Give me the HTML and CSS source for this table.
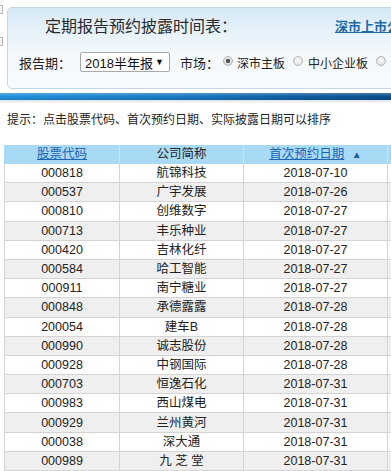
FILE: index.html
```html
<!DOCTYPE html>
<html lang="zh-CN">
<head>
<meta charset="utf-8">
<title>定期报告预约披露时间表</title>
<link rel="stylesheet" href="styles.css">
</head>
<body>
<div class="edge">
  <span class="edge-box e1"></span>
  <span class="edge-box e2"></span>
</div>
<div class="panel">
  <div class="title-row">
    <div class="title">定期报告预约披露时间表：</div>
    <a class="top-link" href="#">深市上市公</a>
  </div>
  <div class="filter-row">
    <span class="label">报告期：</span>
    <div class="select"><span>2018半年报</span><span class="caret">▼</span></div>
    <span class="label market">市场：</span>
    <span class="radio checked"></span><span class="opt">深市主板</span>
    <span class="radio"></span><span class="opt">中小企业板</span>
    <span class="radio"></span>
  </div>
</div>
<div class="bar"></div>
<div class="bar-shadow"></div>
<p class="hint">提示：点击股票代码、首次预约日期、实际披露日期可以排序</p>
<table class="grid">
  <colgroup><col class="c1"><col class="c2"><col class="c3"><col class="c4"></colgroup>
  <thead>
    <tr><th><a href="#">股票代码</a></th><th>公司简称</th><th><a href="#">首次预约日期</a> <span class="tri">▲</span></th><th></th></tr>
  </thead>
  <tbody>
    <tr><td>000818</td><td>航锦科技</td><td>2018-07-10</td><td></td></tr>
    <tr><td>000537</td><td>广宇发展</td><td>2018-07-26</td><td></td></tr>
    <tr><td>000810</td><td>创维数字</td><td>2018-07-27</td><td></td></tr>
    <tr><td>000713</td><td>丰乐种业</td><td>2018-07-27</td><td></td></tr>
    <tr><td>000420</td><td>吉林化纤</td><td>2018-07-27</td><td></td></tr>
    <tr><td>000584</td><td>哈工智能</td><td>2018-07-27</td><td></td></tr>
    <tr><td>000911</td><td>南宁糖业</td><td>2018-07-27</td><td></td></tr>
    <tr><td>000848</td><td>承德露露</td><td>2018-07-28</td><td></td></tr>
    <tr><td>200054</td><td>建车B</td><td>2018-07-28</td><td></td></tr>
    <tr><td>000990</td><td>诚志股份</td><td>2018-07-28</td><td></td></tr>
    <tr><td>000928</td><td>中钢国际</td><td>2018-07-28</td><td></td></tr>
    <tr><td>000703</td><td>恒逸石化</td><td>2018-07-31</td><td></td></tr>
    <tr><td>000983</td><td>西山煤电</td><td>2018-07-31</td><td></td></tr>
    <tr><td>000929</td><td>兰州黄河</td><td>2018-07-31</td><td></td></tr>
    <tr><td>000038</td><td>深大通</td><td>2018-07-31</td><td></td></tr>
    <tr><td>000989</td><td>九 芝 堂</td><td>2018-07-31</td><td></td></tr>
    <tr><td></td><td></td><td></td><td></td></tr>
  </tbody>
</table>
</body>
</html>
```
FILE: styles.css
```css
html, body {
  margin: 0;
  padding: 0;
  background: #fff;
  overflow: hidden;
  width: 391px;
  height: 471px;
}
body {
  font-family: "Liberation Sans", "Noto Sans CJK SC", sans-serif;
  font-size: 12px;
  color: #222;
  position: relative;
}
.edge { position: absolute; left: 0; top: 0; }
.edge-box {
  position: absolute;
  left: -6px;
  width: 7px;
  height: 7px;
  border: 1px solid #b8b8b8;
  background: #f4f4f4;
}
.e1 { top: 5px; }
.e2 { top: 37px; }

.panel {
  margin: 7px 0 0 7px;
  width: 430px;
  border: 1px solid #c6d6e3;
  border-radius: 5px;
  background: linear-gradient(#d6e9f7 0%, #e9f3fa 35%, #f5f9fc 60%, #f7fafc 100%);
  box-sizing: border-box;
  height: 82px;
}
.title-row {
  display: grid;
  grid-template-columns: 290px auto;
  align-items: center;
  padding-left: 37px;
  height: 34px;
}
.title {
  font-size: 16px;
  color: #2a2a2a;
  white-space: nowrap;
}
.top-link {
  font-size: 13px;
  font-weight: bold;
  color: #1c6aa6;
  white-space: nowrap;
}
.filter-row {
  display: flex;
  align-items: center;
  padding-left: 11px;
  height: 40px;
  white-space: nowrap;
  font-size: 12px;
  color: #222;
}
.label { font-size: 13px; }
.select {
  margin-left: 9px;
  width: 90px;
  height: 20px;
  box-sizing: border-box;
  border: 1px solid #a9a9a9;
  border-radius: 2px;
  background: #fff;
  display: flex;
  align-items: center;
  justify-content: space-between;
  padding: 0 5px 0 4px;
  font-size: 13px;
  color: #111;
}
.caret { font-size: 9px; }
.market { margin-left: 10px; }
.radio {
  width: 10px;
  height: 10px;
  border-radius: 50%;
  border: 1px solid #b5b5b5;
  background: radial-gradient(circle at 50% 40%, #fafafa, #dcdcdc);
  box-sizing: border-box;
  margin: 0 5px 0 6px;
  position: relative;
  top: -1px;
  flex: none;
}
.radio.checked {
  margin-left: 4px;
  margin-right: 4px;
  background: radial-gradient(circle, #555 0, #555 2px, #e8e8e8 2.5px, #d0d0d0 100%);
}
.opt { margin-right: 2px; font-size: 12px; }

.bar {
  margin-top: 4px;
  height: 7px;
  background:
    linear-gradient(rgba(255,255,255,0.25), rgba(255,255,255,0) 45%, rgba(0,0,0,0.12)),
    linear-gradient(90deg, #2292dc 0%, #1a7cc6 45%, #0f5c9f 80%, #0b4f8e 100%);
}
.bar-shadow {
  height: 3px;
  background: linear-gradient(#dfe3e6, #f6f6f6);
}
.hint {
  margin: 9px 0 0 7px;
  line-height: 16px;
  font-size: 12px;
  color: #222;
}
.grid {
  margin: 17px 0 0 4px;
  border-collapse: collapse;
  table-layout: fixed;
  width: 480px;
  font-size: 12.5px;
}
.c1 { width: 115px; }
.c2 { width: 124px; }
.c3 { width: 144px; }
.c4 { width: 97px; }
.grid th {
  background: #a8daf6;
  height: 17px;
  padding: 0;
  font-weight: normal;
  color: #222;
  border: 1px solid #a8daf6;
  border-right-color: #cfe6f3;
  line-height: 17px;
}
.grid th a { color: #1a63b6; }
.tri { color: #1e5ea8; font-size: 10px; margin-left: 4px; }
.grid td {
  height: 18.2px;
  padding: 0;
  text-align: center;
  border: 1px solid #d4d4d4;
  line-height: 18px;
  color: #222;
}
.grid tbody tr:nth-child(even) td { background: #efefef; }
```
